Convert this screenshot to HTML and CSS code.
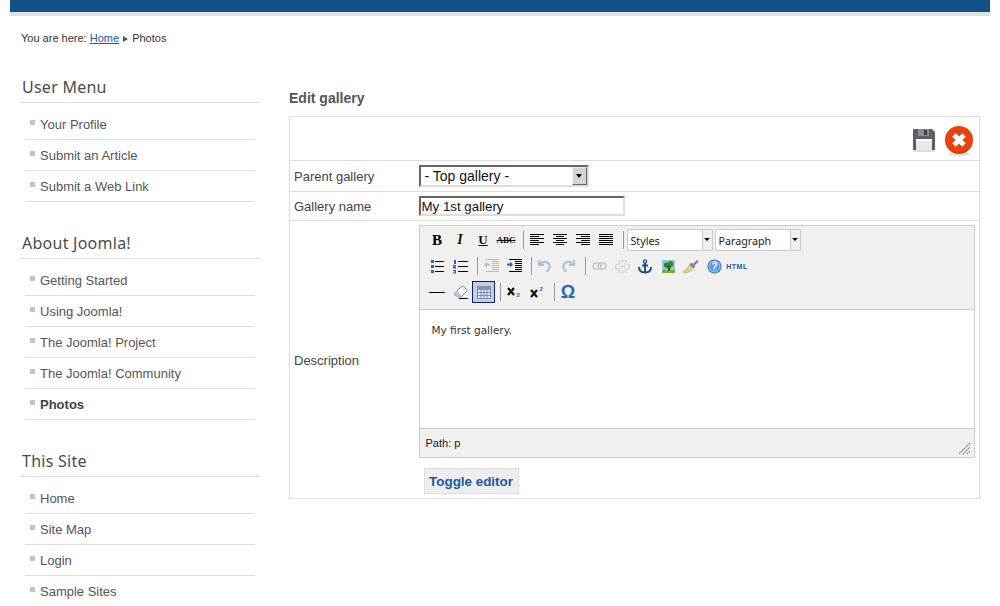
FILE: index.html
```html
<!DOCTYPE html>
<html lang="en">
<head>
<meta charset="utf-8">
<title>Edit gallery</title>
<link rel="stylesheet" href="styles.css">
</head>
<body>
<div class="page">
  <div class="topbar"></div>
  <div class="crumbs">You are here: <a href="#">Home</a> <span class="crumb-arrow"></span> Photos</div>
  <div class="columns">
    <aside class="sidebar">
      <section class="module">
        <h3>User Menu</h3>
        <ul>
          <li><span class="sq"></span>Your Profile</li>
          <li><span class="sq"></span>Submit an Article</li>
          <li><span class="sq"></span>Submit a Web Link</li>
        </ul>
      </section>
      <section class="module">
        <h3>About Joomla!</h3>
        <ul>
          <li><span class="sq"></span>Getting Started</li>
          <li><span class="sq"></span>Using Joomla!</li>
          <li><span class="sq"></span>The Joomla! Project</li>
          <li><span class="sq"></span>The Joomla! Community</li>
          <li class="active"><span class="sq"></span>Photos</li>
        </ul>
      </section>
      <section class="module">
        <h3>This Site</h3>
        <ul>
          <li><span class="sq"></span>Home</li>
          <li><span class="sq"></span>Site Map</li>
          <li><span class="sq"></span>Login</li>
          <li><span class="sq"></span>Sample Sites</li>
        </ul>
      </section>
    </aside>
    <main class="content">
      <h2>Edit gallery</h2>
      <table class="form">
        <colgroup><col class="col-lab"><col class="col-val"></colgroup>
        <tr class="r-actions">
          <td colspan="2">
            <div class="actions">
              <svg class="ico-save" width="24" height="26" viewBox="0 0 24 26">
                <rect x="2" y="23" width="20" height="2" fill="#ddd"/>
                <path d="M2 2h18l3 3v17a1 1 0 0 1-1 1H2a1 1 0 0 1-1-1V3a1 1 0 0 1 1-1z" fill="#5c5f63"/>
                <rect x="6" y="2" width="11" height="7" fill="#8b8e91"/>
                <rect x="12" y="3" width="3" height="5" fill="#3f4245"/>
                <rect x="4" y="12" width="16" height="11" fill="#e8e8e8"/>
                <rect x="4" y="12" width="16" height="2" fill="#fafafa"/>
              </svg>
              <svg class="ico-cancel" width="30" height="32" viewBox="0 0 30 32">
                <ellipse cx="15" cy="29" rx="11" ry="2" fill="#e2e2e2"/>
                <circle cx="15" cy="15" r="14" fill="#e8420f"/>
                <path d="M1.500 18a14 14 0 0 0 27 0a14 13 0 0 1-27 0z" fill="#c9380e"/>
                <path d="M10 10l10 10M20 10l-10 10" stroke="#fff" stroke-width="5"/>
              </svg>
            </div>
          </td>
        </tr>
        <tr class="r-parent">
          <td class="lab">Parent gallery</td>
          <td class="val">
            <div class="fake-select"><span>- Top gallery -</span><span class="arrow"></span></div>
          </td>
        </tr>
        <tr class="r-name">
          <td class="lab">Gallery name</td>
          <td class="val"><div class="fake-input">My 1st gallery</div></td>
        </tr>
        <tr class="r-desc">
          <td class="lab desc-lab">Description</td>
          <td class="val desc-val">
            <div class="editor">
              <div class="toolbar">
                <div class="tb-row">
                  <span class="btn t-b">B</span>
                  <span class="btn t-i">I</span>
                  <span class="btn t-u">U</span>
                  <span class="btn t-s">ABC</span>
                  <span class="sep"></span>
                  <span class="btn"><svg width="14" height="12" viewBox="0 0 14 12"><path d="M0 .5h14M0 2.500h9M0 4.500h14M0 6.500h9M0 8.500h14M0 10.500h9" stroke="#000"/></svg></span>
                  <span class="btn"><svg width="14" height="12" viewBox="0 0 14 12"><path d="M0 .5h14M3 2.500h8M0 4.500h14M3 6.500h8M0 8.500h14M3 10.500h8" stroke="#000"/></svg></span>
                  <span class="btn"><svg width="14" height="12" viewBox="0 0 14 12"><path d="M0 .5h14M5 2.500h9M0 4.500h14M5 6.500h9M0 8.500h14M5 10.500h9" stroke="#000"/></svg></span>
                  <span class="btn"><svg width="14" height="12" viewBox="0 0 14 12"><path d="M0 .5h14M0 2.500h14M0 4.500h14M0 6.500h14M0 8.500h14M0 10.500h14" stroke="#000"/></svg></span>
                  <span class="sep"></span>
                  <div class="tb-select w-styles"><span>Styles</span><span class="tb-arrow"></span></div>
                  <div class="tb-select w-para"><span>Paragraph</span><span class="tb-arrow"></span></div>
                </div>
                <div class="tb-row">
                  <span class="btn"><svg width="14" height="14" viewBox="0 0 14 14"><path d="M5 2.500h9M5 7.500h9M5 12.500h9" stroke="#000"/><path d="M1 1h3v3H1zM1 6h3v3H1zM1 11h3v3H1z" fill="#2f62b4"/></svg></span>
                  <span class="btn"><svg width="15" height="15" viewBox="0 0 15 15"><path d="M5 2.500h10M5 7.500h10M5 12.500h10" stroke="#000"/><path d="M1 1h2v4H1zM0 6h3v1.500H1.500V8H3v1.500H0zM0 11h3v3.500H0v-1h2v-.5H1v-.5h1v-.5H0z" fill="#2f62b4"/></svg></span>
                  <span class="sep"></span>
                  <span class="btn"><svg width="15" height="14" viewBox="0 0 15 14"><path d="M2 .5h13M8 2.500h7M8 4.500h7M8 6.500h7M8 8.500h7M8 10.500h7M2 12.500h13" stroke="#bbb"/><path d="M0 5.500l3-3v2h3v2H3v2z" fill="#a9bfdc"/></svg></span>
                  <span class="btn"><svg width="15" height="14" viewBox="0 0 15 14"><path d="M2 .5h13M8 2.500h7M8 4.500h7M8 6.500h7M8 8.500h7M8 10.500h7M2 12.500h13" stroke="#000"/><path d="M6 5.500l-3-3v2H0v2h3v2z" fill="#2f62b4"/></svg></span>
                  <span class="sep"></span>
                  <span class="btn"><svg width="14" height="14" viewBox="0 0 14 14"><path d="M1 1v5h5M1.500 6C3 2.500 9 1.500 11 5c1.500 3 0 6-2.500 7.500" fill="none" stroke="#a9c2dd" stroke-width="2.200"/></svg></span>
                  <span class="btn"><svg width="14" height="14" viewBox="0 0 14 14"><path d="M13 1v5H8M12.500 6C11 2.500 5 1.500 3 5c-1.500 3 0 6 2.500 7.500" fill="none" stroke="#a9c2dd" stroke-width="2.200"/></svg></span>
                  <span class="sep"></span>
                  <span class="btn"><svg width="15" height="8" viewBox="0 0 15 8"><rect x="1" y="1" width="8" height="6" rx="3" fill="none" stroke="#c4c8cc" stroke-width="1.500"/><rect x="6" y="1" width="8" height="6" rx="3" fill="none" stroke="#c4c8cc" stroke-width="1.500"/></svg></span>
                  <span class="btn"><svg width="15" height="15" viewBox="0 0 15 15"><path d="M6 5H3a2.500 2.500 0 0 0 0 5h3M9 5h3a2.500 2.500 0 0 1 0 5H9M5 7.500h5M7.500 0v3M7.500 12v3M3 1l2 2M12 1l-2 2M3 14l2-2M12 14l-2-2" fill="none" stroke="#c8cbcf" stroke-width="1.200"/></svg></span>
                  <span class="btn"><svg width="14" height="15" viewBox="0 0 14 15"><circle cx="7" cy="2.500" r="1.600" fill="none" stroke="#1f4f8a" stroke-width="1.300"/><path d="M7 4v10M4 6.500h6" stroke="#1f4f8a" stroke-width="2"/><path d="M1 8c0 4 3 5.500 6 5.500s6-1.500 6-5.500" fill="none" stroke="#1f4f8a" stroke-width="2"/></svg></span>
                  <span class="btn"><svg width="15" height="15" viewBox="0 0 15 15"><rect width="15" height="15" fill="#fff"/><rect x="1" y="1" width="13" height="13" fill="#8fc3e6"/><rect x="1" y="11" width="13" height="3" fill="#6cb52c"/><rect x="7" y="7" width="2" height="5" fill="#6a4320"/><circle cx="5.500" cy="6" r="2.600" fill="#2f7d2a"/><circle cx="9.500" cy="5" r="3" fill="#3a8f2f"/><circle cx="8" cy="8" r="2" fill="#266b23"/></svg></span>
                  <span class="btn"><svg width="16" height="15" viewBox="0 0 16 15"><path d="M10 5l4-4 1.500 1.500-4 4z" fill="#6c78b8"/><path d="M8.500 3.500l4 4-2 2-4-4z" fill="#7f7f8c"/><path d="M6.500 5.500l4 4c-2 2.500-5 4-9 4.500 0 0-1.500-.2-1.500-1.500C2 12 5 9 6.500 5.500z" fill="#e5cf86" stroke="#a8935a" stroke-width=".5"/></svg></span>
                  <span class="btn"><svg width="15" height="15" viewBox="0 0 15 15"><circle cx="7.500" cy="7.500" r="7" fill="#2f6fc4"/><circle cx="7.500" cy="7.500" r="5.500" fill="#5d9be0" stroke="#cfe2f7" stroke-width=".8"/><text class="q" x="7.500" y="11" text-anchor="middle">?</text></svg></span>
                  <span class="btn t-html">HTML</span>
                </div>
                <div class="tb-row">
                  <span class="btn"><svg width="16" height="3" viewBox="0 0 16 3"><path d="M0 1.500h16" stroke="#000"/></svg></span>
                  <span class="btn"><svg width="15" height="14" viewBox="0 0 15 14"><path d="M1 9l7-7c1-1 2-1 3 0l2 2c1 1 1 2 0 3l-5 5H5z" fill="#fff" stroke="#6d7f9b"/><path d="M1 9l3-3 5 5-1 1H5z" fill="#b9c6da"/><path d="M6 13.500h9" stroke="#000"/></svg></span>
                  <span class="btn btn-on"><svg width="15" height="15" viewBox="0 0 15 15"><rect x="1.500" y="1.500" width="13" height="12" fill="#dfe8f5" stroke="#7f8fa9"/><rect x="2" y="2" width="12" height="3" fill="#7e96bf"/><path d="M5 5v8M8 5v8M11 5v8M2 7.500h12M2 10.500h12" stroke="#7f8fa9"/></svg></span>
                  <span class="sep"></span>
                  <span class="btn"><svg width="14" height="12" viewBox="0 0 14 12"><path d="M1 2l6 7M7 2L1 9" stroke="#111" stroke-width="2.200"/><text class="idx" x="9.500" y="11">2</text></svg></span>
                  <span class="btn"><svg width="14" height="12" viewBox="0 0 14 12"><path d="M1 4l6 7M7 4l-6 7" stroke="#111" stroke-width="2.200"/><text class="idx" x="9.500" y="5">2</text></svg></span>
                  <span class="sep"></span>
                  <span class="btn t-omega">Ω</span>
                </div>
              </div>
              <div class="edit-area">My first gallery.</div>
              <div class="statusbar">
                <span>Path: p</span>
                <svg class="grip" width="11" height="11" viewBox="0 0 11 11"><path d="M0 11L11 0M4 11l7-7M8 11l3-3" stroke="#777" stroke-width="1.200" stroke-dasharray="1.500 .8"/></svg>
              </div>
            </div>
            <div class="toggle">Toggle editor</div>
          </td>
        </tr>
      </table>
    </main>
  </div>
</div>
</body>
</html>
```
FILE: styles.css
```css
* { box-sizing: border-box; }
html, body { margin: 0; padding: 0; background: #fff; }
body { font-family: "Liberation Sans", Arial, sans-serif; color: #444; overflow: hidden; height: 606px; }
.page { margin: 0 10px; }
.topbar { height: 16px; background: #12508a; border-bottom: 4px solid #e1e1e1; }

.crumbs { margin: 16px 0 0 11px; height: 13px; line-height: 13px; font-size: 11px; color: #333; }
.crumbs a { color: #135cae; text-decoration: underline; }
.crumb-arrow { display: inline-block; width: 0; height: 0; margin: 0 1px 0 1px; border-left: 5px solid #555; border-top: 3px solid transparent; border-bottom: 3px solid transparent; }

.columns { display: flex; margin-top: 32px; }
.sidebar { width: 240px; margin-left: 10px; flex: none; }
.module { margin-bottom: 31px; }
.module:last-child { margin-bottom: 0; }
.module h3 { margin: 0; height: 26px; padding-left: 2px; border-bottom: 1px solid #ddd; font: 400 16px/20px "Noto Sans", sans-serif; color: #4c4c4c; letter-spacing: .25px; }
.module ul { list-style: none; margin: 6px 5px 0; padding: 0; }
.module li { display: flex; align-items: center; height: 31px; padding-left: 5px; border-bottom: 1px solid #ddd; font-size: 13px; color: #555; }
.module:last-child li:last-child { height: 30px; border-bottom: 0; }
.module li.active { font-weight: bold; color: #444; }
.sq { width: 5px; height: 5px; margin-right: 5px; margin-top: -3px; background: #c4c4c4; flex: none; }

.content { margin-left: 29px; margin-top: 12px; width: 691px; flex: none; }
.content h2 { margin: 0 0 3px; height: 24px; font-size: 14px; line-height: 18px; font-weight: bold; color: #555; }
.form { width: 691px; border-collapse: collapse; table-layout: fixed; font-size: 13px; color: #444; }
.col-lab { width: 125px; }
.form td { border: 1px solid #ddd; padding: 0; }
.form td.lab { padding-left: 4px; border-right: 0; }
.form td.desc-lab { padding-top: 2px; }
.form td.val { border-left: 0; padding-left: 4px; }
.r-actions td { height: 44px; }
.r-parent td { height: 31px; }
.r-name td { height: 29px; }
.actions { display: flex; justify-content: flex-end; align-items: flex-start; gap: 8px; padding: 10px 5px 0 0; height: 43px; }
.ico-cancel { margin-top: -2px; }

.fake-select { display: flex; align-items: center; justify-content: space-between; width: 170px; height: 22px; padding-left: 4px; background: #fff; border: 2px solid; border-color: #666 #ddd #ddd #666; font-size: 14px; color: #111; }
.arrow { position: relative; width: 15px; height: 18px; background: #d8d4cc; border: 1px solid; border-color: #eee #666 #666 #eee; }
.arrow::after { content: ""; position: absolute; left: 3px; top: 6px; border-top: 4px solid #000; border-left: 3px solid transparent; border-right: 3px solid transparent; }
.fake-input { width: 206px; height: 20px; padding-left: 1px; line-height: 18px; border: 2px solid; border-color: #666 #ddd #ddd #666; font-size: 13.300px; color: #111; }

.form td.desc-val { padding-top: 4px; padding-bottom: 4px; }
.editor { width: 556px; border: 1px solid #ccc; }
.toolbar { height: 84px; padding: 1px 0 0 6px; background: #f0f0ee; border-bottom: 1px solid #ccc; }
.tb-row { display: flex; align-items: center; height: 26px; }
.btn { display: flex; align-items: center; justify-content: center; width: 23px; height: 22px; flex: none; }
.btn-on { border: 1px solid #0a246a; background: #c2cfe5; }
.sep { width: 1px; height: 18px; margin: 0 2px 0 5px; background: #999; flex: none; }
.t-b { font: bold 15px "Liberation Serif", serif; color: #000; }
.t-i { font: italic bold 14px "Liberation Serif", serif; color: #111; }
.t-u { font: bold 13px "Liberation Serif", serif; color: #111; text-decoration: underline; }
.t-s { font: bold 9px "Liberation Serif", serif; color: #111; text-decoration: line-through; }
.t-html { font: bold 7px "Liberation Sans", sans-serif; color: #2455a4; letter-spacing: .5px; }
.t-omega { font: bold 18px "Liberation Sans", sans-serif; color: #2a63b8; padding-top: 1px; }
.q { font: bold 10px "Liberation Sans", sans-serif; fill: #fff; }
.idx { font: bold 6px "Liberation Sans", sans-serif; fill: #2f62b4; }
.tb-select { display: flex; align-items: center; justify-content: space-between; height: 22px; margin-right: 2px; padding-left: 3px; background: #fff; border: 1px solid #ccc; font: 10.700px "Noto Sans", sans-serif; color: #222; }
.tb-select > span:first-child { padding-top: 1px; }
.w-styles { width: 86px; margin-left: 1px; }
.w-para { width: 86px; }
.tb-arrow { position: relative; width: 10px; height: 20px; border-left: 1px solid #ccc; background: #f0f0ee; }
.tb-arrow::after { content: ""; position: absolute; left: 1px; top: 8px; border-top: 3px solid #000; border-left: 3px solid transparent; border-right: 3px solid transparent; }

.edit-area { height: 119px; padding: 13px 12px; background: #fff; border-bottom: 1px solid #ccc; font: 10.500px/14px "DejaVu Sans", sans-serif; color: #333; }
.statusbar { display: flex; align-items: center; justify-content: space-between; height: 28px; padding: 0 4px 0 6px; background: #f0f0ee; font-size: 11px; color: #222; }
.grip { align-self: flex-end; margin-bottom: 3px; }
.toggle { width: 95px; height: 26px; margin: 10px 0 0 5px; line-height: 25px; text-align: center; background: #eee; border: 1px solid #ddd; font-size: 13.400px; font-weight: bold; color: #1a57a0; }
```
